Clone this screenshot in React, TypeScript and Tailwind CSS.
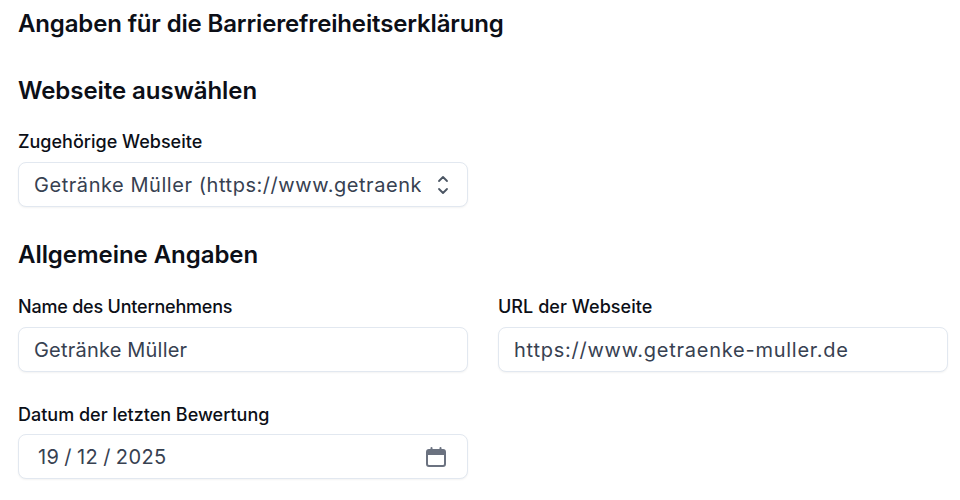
import React from "react";

const fieldClass =
    "h-[45px] w-full rounded-lg border border-[#e2e8f0] bg-white px-[15px] text-[20px] text-[#374151] shadow-[0_1px_2px_rgba(0,0,0,0.05)] font-['Inter',sans-serif]";
const labelClass = "block text-[18px] leading-[24px] font-medium text-[#0c0f17] font-['Inter',sans-serif]";
const h2Class = "text-[24px] leading-[32px] font-semibold text-[#0c0f17] font-['Inter',sans-serif]";

const App: React.FC = () => {
    return (
        <div className="h-[500px] w-[960px] overflow-hidden bg-white pl-[18px] pr-[12px] pt-2">
            <h1 className={`${h2Class} tracking-[-0.15px]`}>Angaben für die Barrierefreiheitserklärung</h1>

            {/* Webseite */}
            <h2 className={`${h2Class} mt-[35px] tracking-[-0.05px]`}>Webseite auswählen</h2>
            <div className="mt-[23px] w-[450px]">
                <label className={`${labelClass} mb-2`}>Zugehörige Webseite</label>
                <div className="relative">
                    <select className={`${fieldClass} appearance-none pr-[46px] tracking-[0.55px]`} defaultValue="mueller">
                        <option value="mueller">Getränke Müller (https://www.getraenke-muller.de)</option>
                    </select>
                    <svg width="16" height="24" viewBox="0 0 16 24" fill="none" stroke="#4b5563" strokeWidth="1.8" strokeLinecap="round" strokeLinejoin="round" className="absolute right-[17px] top-[11px]">
                        <path d="M4 8l4-4 4 4" />
                        <path d="M4 16l4 4 4-4" />
                    </svg>
                </div>
            </div>

            {/* Allgemeine Angaben */}
            <h2 className={`${h2Class} mt-[32px] tracking-[-0.05px]`}>Allgemeine Angaben</h2>
            <div className="mt-[24px] grid grid-cols-2 gap-x-[30px]">
                <div>
                    <label className={`${labelClass} mb-2 tracking-[-0.2px]`}>Name des Unternehmens</label>
                    <input readOnly className={`${fieldClass} tracking-[0.2px]`} value="Getränke Müller" />
                </div>
                <div>
                    <label className={`${labelClass} mb-2 tracking-[0.05px]`}>URL der Webseite</label>
                    <input readOnly className={`${fieldClass} tracking-[0.75px]`} value="https://www.getraenke-muller.de" />
                </div>
            </div>
            <div className="mt-[31px] w-[450px]">
                <label className={`${labelClass} mb-[7px]`}>Datum der letzten Bewertung</label>
                <div className={`${fieldClass} flex items-center justify-between pl-[19px]`}>
                    <span className="tracking-[0.4px] [word-spacing:-1px]">19 / 12 / 2025</span>
                    <svg width="24" height="24" viewBox="0 0 24 24" className="mr-[4px]" fill="none">
                        <rect x="3" y="5" width="18" height="16" rx="2" stroke="#6b7280" strokeWidth="2" />
                        <path d="M3 6.5a2 2 0 0 1 2-2h14a2 2 0 0 1 2 2V10H3z" fill="#6b7280" />
                        <path d="M7.5 3v3M16.5 3v3" stroke="#6b7280" strokeWidth="2" strokeLinecap="round" />
                    </svg>
                </div>
            </div>
        </div>
    );
};

export default App;
